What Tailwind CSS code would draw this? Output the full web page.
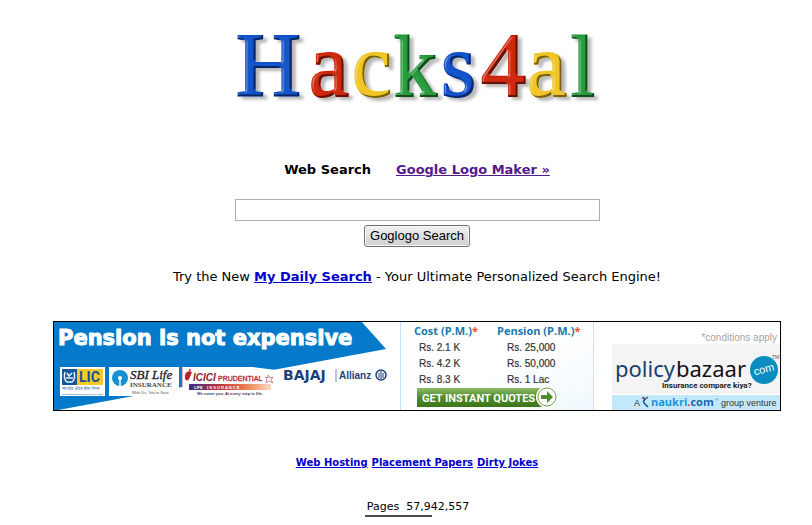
<!DOCTYPE html>
<html lang="en">
<head>
    <meta charset="UTF-8">
    <meta name="viewport" content="width=device-width, initial-scale=1.0">
    <title>Hacks4al</title>
    <script src="https://cdn.jsdelivr.net/npm/@tailwindcss/browser@4"></script>
</head>
<body class="bg-white text-black font-['Verdana','DejaVu_Sans',sans-serif] text-[13px] leading-4">

    <div class="flex flex-col items-center pl-[22px] pt-3">

        <!-- Logo -->
        <h1>
            <svg class="block h-[108px] w-[372px]" viewBox="0 -16 372 108" role="img" aria-label="Hacks4al">
                <defs>
                    <filter id="bevel" x="-5%" y="-10%" width="112%" height="125%" color-interpolation-filters="sRGB">
                        <feGaussianBlur in="SourceAlpha" stdDeviation="1.2" result="blur"/>
                        <feSpecularLighting in="blur" surfaceScale="2" specularConstant="0.45" specularExponent="22" lighting-color="#ffffff" result="spec">
                            <feDistantLight azimuth="200" elevation="35"/>
                        </feSpecularLighting>
                        <feComposite in="spec" in2="SourceAlpha" operator="in" result="light"/>
                        <feOffset in="SourceAlpha" dx="-2" dy="-2" result="moved"/>
                        <feComposite in="SourceAlpha" in2="moved" operator="out" result="edge"/>
                        <feGaussianBlur in="edge" stdDeviation="0.7" result="edgeblur"/>
                        <feComposite in="edgeblur" in2="SourceAlpha" operator="in" result="dark"/>
                        <feComponentTransfer in="dark" result="darksoft">
                            <feFuncA type="linear" slope="0.5"/>
                        </feComponentTransfer>
                        <feOffset in="SourceAlpha" dx="4" dy="3" result="off"/>
                        <feGaussianBlur in="off" stdDeviation="1.8" result="shadow"/>
                        <feComponentTransfer in="shadow" result="shadowsoft">
                            <feFuncA type="linear" slope="0.28"/>
                        </feComponentTransfer>
                        <feMerge>
                            <feMergeNode in="shadowsoft"/>
                            <feMergeNode in="SourceGraphic"/>
                            <feMergeNode in="light"/>
                            <feMergeNode in="darksoft"/>
                        </feMerge>
                    </filter>
                </defs>
                <g filter="url(#bevel)" class="font-['Liberation_Serif',serif]" font-size="90" stroke-width="2">
                    <text x="5" y="68" fill="#0f4fc9" stroke="#0f4fc9">H</text>
                    <text x="78" y="68" fill="#cc2408" stroke="#cc2408">a</text>
                    <text x="121" y="68" fill="#f0c420" stroke="#f0c420">c</text>
                    <text x="163" y="68" font-size="86" fill="#25983a" stroke="#25983a">k</text>
                    <text x="210" y="68" fill="#0f4fc9" stroke="#0f4fc9">s</text>
                    <text x="250" y="68" fill="#cc2408" stroke="#cc2408">4</text>
                    <text x="296" y="68" fill="#f0c420" stroke="#f0c420">a</text>
                    <text x="340" y="68" font-size="86" fill="#25983a" stroke="#25983a">l</text>
                </g>
            </svg>
        </h1>

        <!-- Search tabs -->
        <nav class="mt-[42px] flex gap-[25px] font-bold">
            <span>Web Search</span>
            <a href="#" class="text-[#551a8b] underline">Google Logo Maker »</a>
        </nav>

        <!-- Search form -->
        <form class="mt-[21px] flex flex-col items-center gap-1" onsubmit="return false">
            <input type="text" name="q" aria-label="Search" class="h-[22px] w-[365px] border border-[#abadb3] bg-white px-1">
            <button type="submit" class="h-[22px] rounded-[3px] border border-[#707070] bg-linear-to-b from-[#f2f2f2] to-[#cfcfcf] px-[5px] font-['Liberation_Sans',sans-serif] text-[13px] leading-4 shadow-[inset_0_0_0_1px_#fafafa]">Goglogo Search</button>
        </form>

        <p class="mt-[22px]">Try the New <a href="#" class="font-bold text-[#0000cc] underline">My Daily Search</a> - Your Ultimate Personalized Search Engine!</p>

        <!-- Banner ad -->
        <a href="#" class="mt-9 block w-full max-w-[728px]">
            <svg class="block w-full font-['Liberation_Sans',sans-serif]" viewBox="0 0 728 90" role="img" aria-label="Pension is not expensive">
                <defs>
                    <linearGradient id="quote" x1="0" y1="0" x2="0" y2="1">
                        <stop offset="0" stop-color="#8db96a"/>
                        <stop offset="0.5" stop-color="#4f8c2a"/>
                        <stop offset="1" stop-color="#3c7519"/>
                    </linearGradient>
                    <linearGradient id="pale" x1="0" y1="0" x2="1" y2="1">
                        <stop offset="0.5" stop-color="#ffffff"/>
                        <stop offset="1" stop-color="#f0f9fe"/>
                    </linearGradient>
                    <linearGradient id="iciciBar" x1="0" y1="0" x2="1" y2="0">
                        <stop offset="0" stop-color="#3a2e86"/>
                        <stop offset="0.35" stop-color="#b5303c"/>
                        <stop offset="0.7" stop-color="#ee8050"/>
                        <stop offset="1" stop-color="#fbd9c4"/>
                    </linearGradient>
                </defs>
                <rect width="728" height="90" fill="#ffffff"/>
                <path d="M0 0H308L333 28L0 90Z" fill="#057acb"/>
                <text x="5" y="24" font-size="21" font-weight="700" fill="#ffffff" stroke="#ffffff" stroke-width="1" class="font-['DejaVu_Sans',sans-serif]">Pension is not expensive</text>

                <!-- LIC -->
                <rect x="7" y="46" width="45" height="29" fill="#ffffff"/>
                <rect x="9" y="48" width="15" height="16" fill="#12589f"/>
                <path d="M12 51Q10 58 14 61H19Q23 58 21 51M14 52L16 55L19 52M13 57H20" fill="none" stroke="#e8f0f8" stroke-width="1.5"/>
                <rect x="24" y="48" width="26" height="16" fill="#f6c927"/>
                <text x="26" y="61" font-size="14" font-weight="700" fill="#174f9c" class="font-['Roboto',sans-serif]">LIC</text>
                <text x="9" y="69" font-size="4" fill="#3d6b9f" class="font-['Noto_Sans',sans-serif]">भारतीय जीवन बीमा निगम</text>
                <text x="9" y="74" font-size="2" font-weight="700" fill="#3d5f8f">LIFE INSURANCE CORPORATION OF INDIA</text>

                <!-- SBI Life -->
                <rect x="56" y="46" width="70" height="29" fill="#ffffff"/>
                <circle cx="67" cy="57" r="8" fill="#1492d3"/>
                <circle cx="67" cy="57" r="2" fill="#ffffff"/>
                <path d="M67 57V66" stroke="#ffffff" stroke-width="1.5"/>
                <text x="77" y="58" font-size="13" font-style="italic" fill="#222222" stroke="#222222" stroke-width="0.3" class="font-['Liberation_Serif',serif]">SBI Life</text>
                <text x="77" y="66" font-size="7" font-weight="700" fill="#444444" class="font-['Liberation_Serif',serif]">INSURANCE</text>
                <text x="79" y="73" font-size="4" fill="#555555">With Us, You're Sure</text>

                <!-- ICICI Prudential -->
                <path d="M129 46H200L223 49V75H129Z" fill="#ffffff"/>
                <path d="M129 46V66" stroke="#c4515d" stroke-width="1"/>
                <path d="M136 50Q131 51 132 58Q135 62 137 56L139 51Z" fill="#b52335"/>
                <circle cx="137" cy="49" r="1" fill="#b52335"/>
                <text x="140" y="60" font-size="10" font-weight="700" font-style="italic" fill="#8f1d32">ICICI</text>
                <text x="165" y="60" font-size="7" fill="#b52335" stroke="#b52335" stroke-width="0.3">PRUDENTIAL</text>
                <path d="M215 54L217 57L220 56L218 59L220 62L216 60L213 62L214 58L212 56L215 57Z" fill="none" stroke="#c78b8b" stroke-width="1"/>
                <rect x="136" y="63" width="82" height="6" fill="url(#iciciBar)"/>
                <text x="141" y="68" font-size="4" font-weight="700" fill="#ffffff">LIFE&#160;&#160;&#160;&#160;I N S U R A N C E</text>
                <text x="144" y="74" font-size="4" font-weight="700" fill="#3d3d60">We cover you. At every step in life.</text>

                <!-- Bajaj Allianz -->
                <text x="230" y="59" font-size="14" font-weight="700" fill="#1d3f78" class="font-['DejaVu_Sans',sans-serif]">BAJAJ</text>
                <path d="M283 48V61" stroke="#6f88ad" stroke-width="1"/>
                <text x="286" y="58" font-size="10" font-weight="700" fill="#1d3f78">Allianz</text>
                <circle cx="328" cy="54" r="5" fill="none" stroke="#1d3f78" stroke-width="1.5"/>
                <path d="M326 57V52M328 58V50M330 57V52" stroke="#1d3f78" stroke-width="1"/>

                <!-- Quotes -->
                <rect x="347" width="194" height="90" fill="url(#pale)"/>
                <path d="M347.5 0V90M540.5 0V90" stroke="#bfe6fb" stroke-width="1"/>
                <g font-size="11" font-weight="700" fill="#1878b0" class="font-['Open_Sans',sans-serif]">
                    <text x="361" y="14">Cost (P.M.)<tspan fill="#e8502a">*</tspan></text>
                    <text x="444" y="14">Pension (P.M.)<tspan fill="#e8502a">*</tspan></text>
                </g>
                <g font-size="10" fill="#333333" stroke="#333333" stroke-width="0.2">
                    <text x="366" y="30">Rs. 2.1 K</text>
                    <text x="454" y="30">Rs. 25,000</text>
                    <text x="366" y="46">Rs. 4.2 K</text>
                    <text x="454" y="46">Rs. 50,000</text>
                    <text x="366" y="62">Rs. 8.3 K</text>
                    <text x="454" y="62">Rs. 1 Lac</text>
                </g>
                <rect x="364" y="67" width="130" height="19" fill="url(#quote)"/>
                <text x="369" y="81" font-size="11" font-weight="700" fill="#ffffff" class="font-['Roboto',sans-serif]">GET INSTANT QUOTES</text>
                <circle cx="494" cy="76" r="11" fill="#ffffff"/>
                <circle cx="494" cy="76" r="9" fill="#ffffff" stroke="#6ba043" stroke-width="1"/>
                <path d="M488 74H494V70L500 76L494 82V78H488Z" fill="#4f8c2a"/>

                <!-- Policybazaar -->
                <text x="724" y="20" font-size="10" text-anchor="end" fill="#a3a3a3">*conditions apply</text>
                <rect x="559" y="23" width="168" height="50" fill="#f4f4f4"/>
                <g font-size="22" class="font-['Noto_Sans',sans-serif]">
                    <text x="562" y="56" fill="#173f6c">policy</text>
                    <text x="623" y="56" fill="#111111">bazaar</text>
                </g>
                <circle cx="711" cy="49" r="14" fill="#0c8dc2"/>
                <text x="711" y="52" font-size="11" text-anchor="middle" fill="#ffffff" transform="rotate(-15 711 49)">com</text>
                <text x="719" y="38" font-size="5" fill="#555555">TM</text>
                <text x="609" y="67" font-size="8" font-weight="700" fill="#222222" class="font-['Roboto',sans-serif]">Insurance compare kiya?</text>
                <rect x="559" y="74" width="168" height="15" fill="#c4e8fb"/>
                <text x="581" y="85" font-size="9" fill="#333333">A</text>
                <path d="M595 76Q589 80 591 82L595 86M590 76L592 79" fill="none" stroke="#154f91" stroke-width="1.5"/>
                <circle cx="590" cy="77" r="1" fill="#d9302c"/>
                <text x="598" y="85" font-size="11" font-weight="700" fill="#1598dc" class="font-['Open_Sans',sans-serif]">naukri<tspan fill="#d9302c">.</tspan><tspan fill="#1c64b0">com</tspan></text>
                <text x="662" y="80" font-size="4" fill="#1c64b0">®</text>
                <text x="668" y="85" font-size="9" fill="#333333">group venture</text>
                <rect x="0.5" y="0.5" width="727" height="89" fill="none" stroke="#000000" stroke-width="1"/>
            </svg>
        </a>

        <!-- Footer links -->
        <nav class="mt-11 flex gap-1 text-[10px] font-bold text-[#0000cc]">
            <a href="#" class="underline">Web Hosting</a>
            <a href="#" class="underline">Placement Papers</a>
            <a href="#" class="underline">Dirty Jokes</a>
        </nav>

        <!-- Page counter -->
        <div class="mt-7">
            <p class="pl-0.5 text-[11px]">Pages&nbsp; 57,942,557</p>
            <hr class="w-[67px] border-t-2 border-[#4d4d4d]">
        </div>
    </div>

</body>
</html>
